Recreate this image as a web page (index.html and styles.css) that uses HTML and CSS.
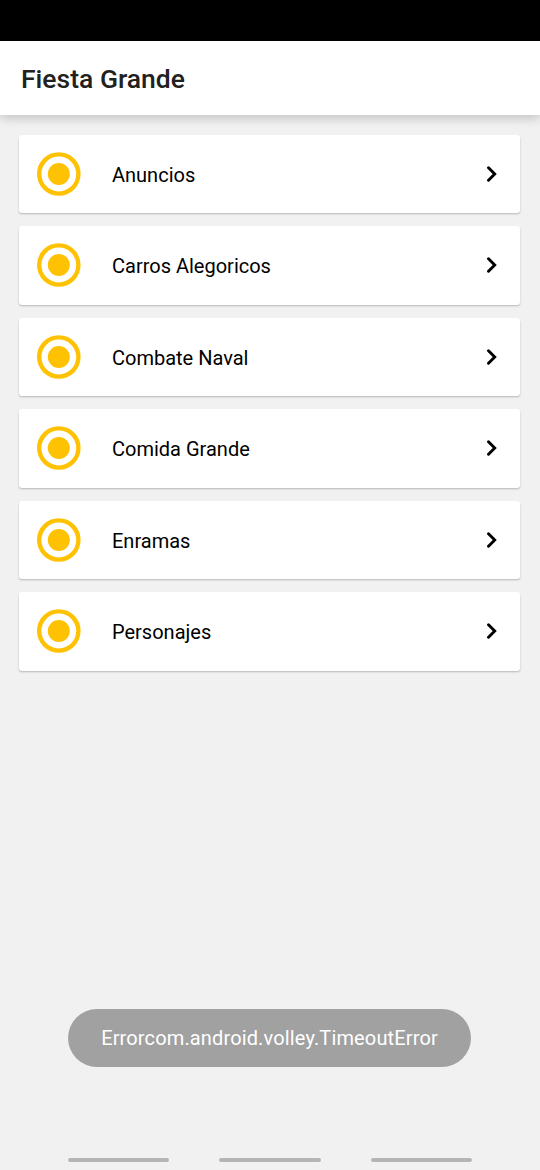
FILE: index.html
```html
<!DOCTYPE html>
<html lang="es">
<head>
<meta charset="utf-8">
<title>Fiesta Grande</title>
<link rel="stylesheet" href="styles.css">
</head>
<body>
<svg class="defs" aria-hidden="true">
  <symbol id="radio" viewBox="0 0 44 44"><circle cx="21.8" cy="22" r="19.6" fill="none" stroke="currentColor" stroke-width="4.4"/><circle cx="21.8" cy="22" r="11" fill="currentColor"/></symbol>
  <symbol id="chevron" viewBox="0 0 12 16"><path d="M2.5 1.8 8.7 8 2.5 14.2" fill="none" stroke="currentColor" stroke-width="2.9" stroke-linecap="round"/></symbol>
</svg>
<div class="screen">
  <div class="status"></div>
  <header class="appbar"><h1 class="title">Fiesta Grande</h1></header>
  <main class="list">
    <div class="card"><svg class="radio"><use href="#radio"/></svg><span class="label">Anuncios</span><svg class="chevron"><use href="#chevron"/></svg></div>
    <div class="card"><svg class="radio"><use href="#radio"/></svg><span class="label">Carros Alegoricos</span><svg class="chevron"><use href="#chevron"/></svg></div>
    <div class="card"><svg class="radio"><use href="#radio"/></svg><span class="label">Combate Naval</span><svg class="chevron"><use href="#chevron"/></svg></div>
    <div class="card"><svg class="radio"><use href="#radio"/></svg><span class="label">Comida Grande</span><svg class="chevron"><use href="#chevron"/></svg></div>
    <div class="card"><svg class="radio"><use href="#radio"/></svg><span class="label">Enramas</span><svg class="chevron"><use href="#chevron"/></svg></div>
    <div class="card"><svg class="radio"><use href="#radio"/></svg><span class="label">Personajes</span><svg class="chevron"><use href="#chevron"/></svg></div>
  </main>
  <div class="toast">Errorcom.android.volley.TimeoutError</div>
  <nav class="gestures"><i class="pill"></i><i class="pill"></i><i class="pill"></i></nav>
</div>
</body>
</html>
```

FILE: styles.css
```css
* { box-sizing: border-box; }
body { margin: 0; background: #f1f1f1; font-family: Roboto, sans-serif; }
.defs { position: absolute; width: 0; height: 0; }
.screen { width: 540px; height: 1170px; display: flex; flex-direction: column; overflow: hidden; }
.status { height: 41px; background: #000; flex: none; }
.appbar { height: 74px; flex: none; display: flex; align-items: center; padding: 1px 21px 0; background: #fff; box-shadow: 0 3px 10px rgba(0,0,0,.2); }
.title { margin: 0; font-size: 26.5px; line-height: 32px; font-weight: 500; color: #212121; }
.list { display: flex; flex-direction: column; gap: 13.1px; padding: 19.7px 19.6px 0 19px; flex: 1; }
.card { height: 78.4px; display: flex; align-items: center; padding: 0 22.5px 0 18px; background: #fff; border-radius: 3px; box-shadow: 0 1.5px 2px -.5px rgba(0,0,0,.24); }
.radio { width: 44px; height: 44px; color: #ffc203; }
.label { flex: 1; margin-left: 31px; padding-top: 2px; font-size: 20px; line-height: 24px; color: #000; }
.chevron { width: 12px; height: 16px; color: #000; }
.toast { align-self: center; flex: none; width: 403px; height: 58px; margin-right: 1px; border-radius: 29px; background: #a1a1a1; color: #fff; font-size: 20px; letter-spacing: .14px; line-height: 59px; text-align: center; }
.gestures { flex: none; height: 103.5px; display: flex; align-items: flex-end; gap: 50px; padding: 0 68px 8px; }
.pill { flex: 1; height: 4px; border-radius: 2px; background: #b5b5b5; }
```
